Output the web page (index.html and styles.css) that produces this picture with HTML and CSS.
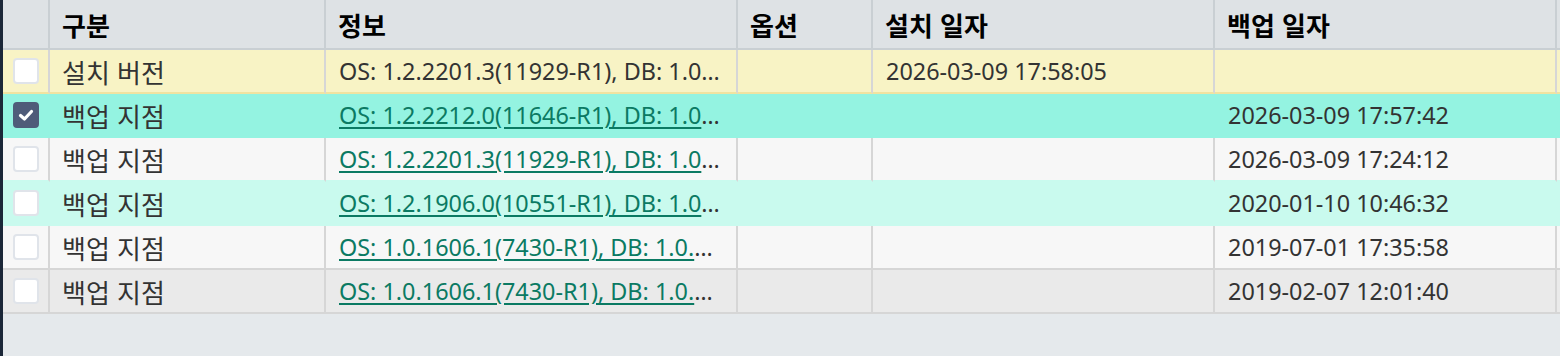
FILE: index.html
```html
<!DOCTYPE html>
<html lang="ko">
<head>
<meta charset="utf-8">
<link rel="stylesheet" href="styles.css">
</head>
<body>
<div class="page">
  <div class="side"></div>
  <div class="main">
    <div class="grid">
      <div class="row head">
        <div class="cell"></div>
        <div class="cell ko">구분</div>
        <div class="cell ko">정보</div>
        <div class="cell ko">옵션</div>
        <div class="cell ko">설치 일자</div>
        <div class="cell ko">백업 일자</div>
        <div class="cell end"></div>
      </div>
      <div class="row r-install">
        <div class="cell chk"><span class="box"></span></div>
        <div class="cell ko">설치 버전</div>
        <div class="cell info">OS: 1.2.2201.3(11929-R1), DB: 1.0.2201.3(11929-R1)</div>
        <div class="cell"></div>
        <div class="cell">2026-03-09 17:58:05</div>
        <div class="cell"></div>
        <div class="cell end"></div>
      </div>
      <div class="row r-selected">
        <div class="cell chk"><span class="box on"><svg viewBox="0 0 26 26" width="26" height="26"><path d="M7.5 13.5 L11.5 17 L18.5 9.5" fill="none" stroke="#fff" stroke-width="3.2" stroke-linecap="round" stroke-linejoin="round"/></svg></span></div>
        <div class="cell ko">백업 지점</div>
        <div class="cell info"><a href="#">OS: 1.2.2212.0(11646-R1), DB: 1.0.2212.0(11646-R1)</a></div>
        <div class="cell"></div>
        <div class="cell"></div>
        <div class="cell">2026-03-09 17:57:42</div>
        <div class="cell end"></div>
      </div>
      <div class="row r-plain">
        <div class="cell chk"><span class="box"></span></div>
        <div class="cell ko">백업 지점</div>
        <div class="cell info"><a href="#">OS: 1.2.2201.3(11929-R1), DB: 1.0.2201.3(11929-R1)</a></div>
        <div class="cell"></div>
        <div class="cell"></div>
        <div class="cell">2026-03-09 17:24:12</div>
        <div class="cell end"></div>
      </div>
      <div class="row r-hover">
        <div class="cell chk"><span class="box"></span></div>
        <div class="cell ko">백업 지점</div>
        <div class="cell info"><a href="#">OS: 1.2.1906.0(10551-R1), DB: 1.0.1906.0(10551-R1)</a></div>
        <div class="cell"></div>
        <div class="cell"></div>
        <div class="cell">2020-01-10 10:46:32</div>
        <div class="cell end"></div>
      </div>
      <div class="row r-plain2">
        <div class="cell chk"><span class="box"></span></div>
        <div class="cell ko">백업 지점</div>
        <div class="cell info"><a href="#">OS: 1.0.1606.1(7430-R1), DB: 1.0.1606.1(7430-R1)</a></div>
        <div class="cell"></div>
        <div class="cell"></div>
        <div class="cell">2019-07-01 17:35:58</div>
        <div class="cell end"></div>
      </div>
      <div class="row r-gray">
        <div class="cell chk"><span class="box"></span></div>
        <div class="cell ko">백업 지점</div>
        <div class="cell info"><a href="#">OS: 1.0.1606.1(7430-R1), DB: 1.0.1606.1(7430-R1)</a></div>
        <div class="cell"></div>
        <div class="cell"></div>
        <div class="cell">2019-02-07 12:01:40</div>
        <div class="cell end"></div>
      </div>
    </div>
  </div>
</div>
</body>
</html>
```

FILE: styles.css
```css
* { box-sizing: border-box; }
html, body {
  margin: 0;
  padding: 0;
  width: 1560px;
  height: 356px;
  overflow: hidden;
  background: #e5e9ec;
  font-family: "Noto Sans", "Noto Sans CJK KR", sans-serif;
}
.page {
  display: flex;
  height: 356px;
}
.side {
  width: 3px;
  flex: none;
  background: #1b2738;
}
.main {
  flex: 1;
  background: #e5e9ec;
}
.row {
  display: grid;
  grid-template-columns: 47px 276px 412px 135px 342px 342px 1fr;
  height: 44px;
  --bg: #f7f7f7;
  --bd: #d6d6d6;
  --vl: #d6d6d6;
  background: var(--bg);
}
.cell {
  background: var(--bg);
  border-right: 2px solid var(--vl);
  border-bottom: 2px solid var(--bd);
  padding: 0 12px 0 13px;
  display: flex;
  align-items: center;
  font-size: 23.4px;
  color: #333;
  white-space: nowrap;
  overflow: hidden;
  min-width: 0;
}
.cell.ko {
  font-family: "Noto Sans CJK KR", sans-serif;
  font-size: 26px;
  padding-left: 12px;
}
.cell.end { border-right: none; }
.head {
  height: 50px;
  --bg: #dee2e5;
  --bd: #c9cfd3;
  --vl: #c9cfd3;
}
.head .cell {
  font-weight: 700;
  color: #000;
}
.head .cell.ko { font-size: 26px; }
.r-install { --bg: #f8f3c5; --bd: #f0e3a1; }
.r-selected { --bg: #94f3e1; --bd: #94f3e1; --vl: #94f3e1; }
.r-plain { --bd: #c9faee; }
.r-hover { --bg: #c9faee; --bd: #c9faee; --vl: #c9faee; }
.r-gray { --bg: #eaeaea; }
.info {
  display: block;
  line-height: 42px;
  text-overflow: ellipsis;
}
.info a {
  color: #0b7a63;
  text-decoration: underline;
  text-underline-offset: 3px;
}
.chk {
  padding: 0;
  justify-content: center;
}
.box {
  width: 26px;
  height: 26px;
  border: 2px solid #e0e4ea;
  border-radius: 4px;
  background: #fff;
  display: block;
  position: relative;
}
.box.on {
  background: #4f5b79;
  border-color: #4f5b79;
}
.box svg {
  position: absolute;
  left: -2px;
  top: -2px;
}
```
